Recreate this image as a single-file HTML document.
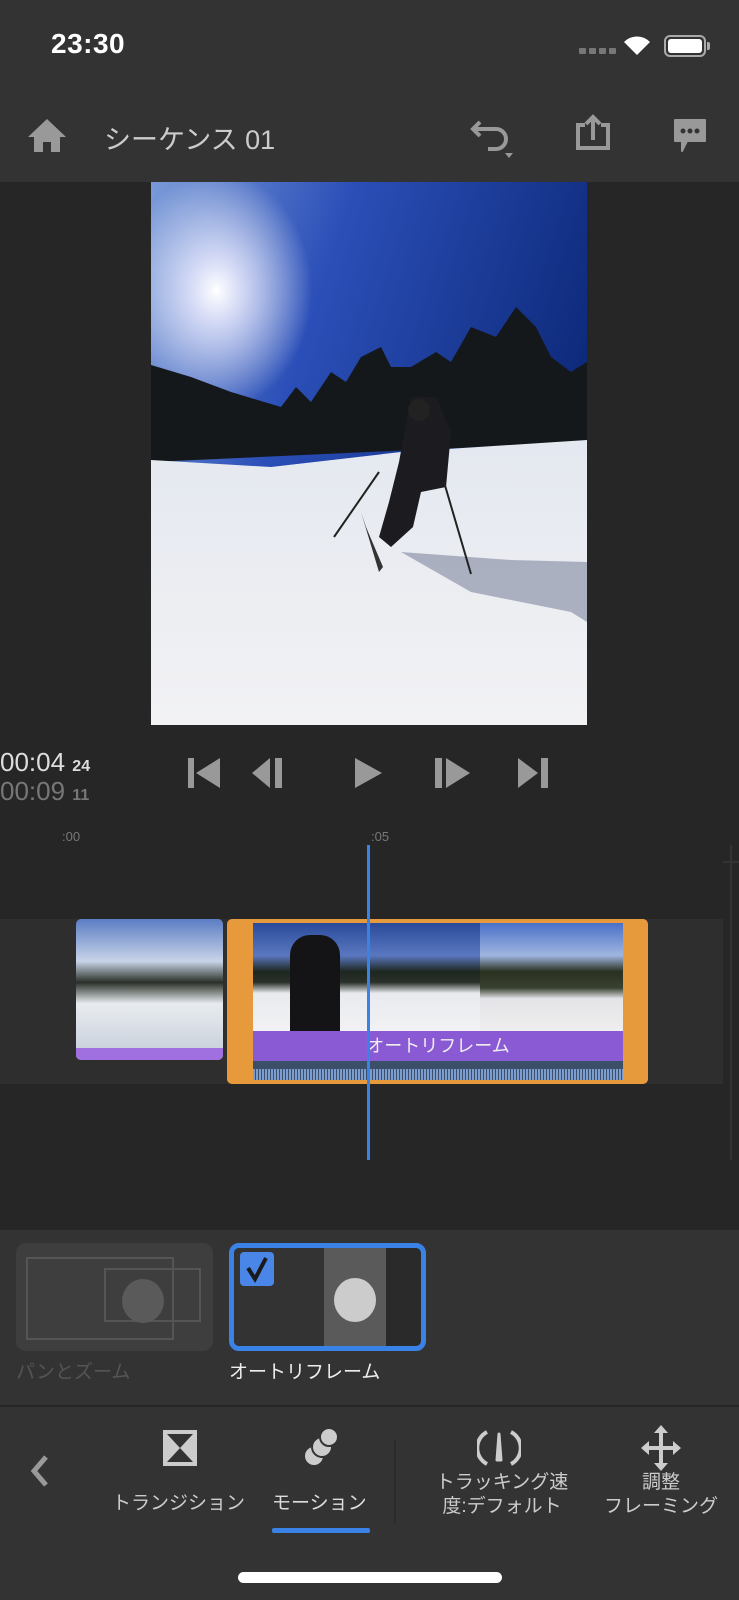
<!DOCTYPE html>
<html><head><meta charset="utf-8"><style>
*{margin:0;padding:0;box-sizing:border-box}
body{width:739px;height:1600px;background:#262626;font-family:"Liberation Sans","Noto Sans CJK JP",sans-serif;position:relative;overflow:hidden;color:#fff}
.a{position:absolute}
</style></head><body>
<div class="a" style="left:0;top:0;width:739px;height:182px;background:#333"></div>
<div class="a" style="left:51px;top:28px;font-size:28px;font-weight:bold;letter-spacing:0.5px">23:30</div>
<div class="a" style="left:579px;top:48px;width:37px;height:6px;display:flex;gap:3px"><i style="width:7px;height:6px;background:#777;border-radius:1px"></i><i style="width:7px;height:6px;background:#777;border-radius:1px"></i><i style="width:7px;height:6px;background:#777;border-radius:1px"></i><i style="width:7px;height:6px;background:#777;border-radius:1px"></i></div>
<svg class="a" style="left:622px;top:34px" width="30" height="22" viewBox="0 0 30 22"><path d="M15 21 L2 8 A18 18 0 0 1 28 8 Z" fill="#fff"/></svg>
<div class="a" style="left:664px;top:35px;width:42px;height:22px;border:2px solid #aaa;border-radius:6px;padding:2px"><div style="width:100%;height:100%;background:#fff;border-radius:3px"></div></div>
<div class="a" style="left:707px;top:42px;width:3px;height:8px;background:#aaa;border-radius:0 2px 2px 0"></div>
<svg class="a" style="left:27px;top:117px" width="40" height="36" viewBox="0 0 40 36"><path d="M20 2 L39 20 L33 20 L33 35 L24 35 L24 25 L16 25 L16 35 L7 35 L7 20 L1 20 Z" fill="#999"/></svg>
<div class="a" style="left:104px;top:118px;font-size:27px;color:#ccc">シーケンス 01</div>
<svg class="a" style="left:470px;top:117px" width="48" height="42" viewBox="0 0 48 42"><path d="M10 5 L3 12 L10 19 M3 12 L26 12 A10 10 0 0 1 26 32 L18 32" stroke="#999" stroke-width="4" fill="none"/><path d="M35 36 L43 36 L39 41Z" fill="#999"/></svg>
<svg class="a" style="left:575px;top:114px" width="36" height="36" viewBox="0 0 36 36"><path d="M10 11 L3 11 L3 34 L33 34 L33 11 L26 11" stroke="#999" stroke-width="4" fill="none"/><path d="M18 26 L18 4 M11 10 L18 3 L25 10" stroke="#999" stroke-width="4" fill="none"/></svg>
<svg class="a" style="left:672px;top:117px" width="36" height="36" viewBox="0 0 36 36"><path d="M3 3 H33 V24 H15 L10 34 L10 24 H3 Z" fill="#999" stroke="#999" stroke-width="2" stroke-linejoin="round"/><circle cx="11" cy="14" r="2.5" fill="#333"/><circle cx="18" cy="14" r="2.5" fill="#333"/><circle cx="25" cy="14" r="2.5" fill="#333"/></svg>

<svg class="a" style="left:151px;top:182px" width="436" height="543" viewBox="0 0 436 543">
<defs>
<linearGradient id="sky" x1="0" y1="0" x2="1" y2="0.4"><stop offset="0" stop-color="#7a9ad8"/><stop offset="0.4" stop-color="#2b4fb8"/><stop offset="1" stop-color="#0c2878"/></linearGradient>
<radialGradient id="sun" cx="0.15" cy="0.2" r="0.22"><stop offset="0" stop-color="#fff"/><stop offset="0.3" stop-color="#eef" stop-opacity="0.8"/><stop offset="1" stop-color="#fff" stop-opacity="0"/></radialGradient>
<linearGradient id="snow" x1="0" y1="0" x2="0" y2="1"><stop offset="0" stop-color="#e4e8f0"/><stop offset="1" stop-color="#f2f2f4"/></linearGradient>
</defs>
<rect width="436" height="543" fill="url(#sky)"/>
<rect width="436" height="543" fill="url(#sun)"/>
<path d="M0 183 L40 195 L80 210 L130 225 L145 205 L160 220 L180 190 L195 200 L210 175 L230 165 L240 185 L260 185 L285 170 L300 180 L320 145 L345 155 L365 125 L385 145 L400 175 L420 190 L436 180 L436 260 L0 280 Z" fill="#14181a"/>
<path d="M0 278 L120 285 L250 270 L436 258 L436 543 L0 543 Z" fill="url(#snow)"/>
<path d="M250 370 L320 410 L420 430 L436 440 L436 380 L360 378 Z" fill="#8e96ab" opacity="0.7"/>
<path d="M260 215 L285 215 L300 250 L295 305 L270 310 L262 345 L240 365 L228 355 L238 320 L248 280 Z" fill="#1c1c20"/>
<circle cx="268" cy="228" r="11" fill="#222"/>
<path d="M210 330 L215 345 L232 385 L228 390Z" fill="#333"/>
<path d="M183 355 L228 290 M293 300 L320 392" stroke="#222" stroke-width="2"/>
</svg>

<div class="a" style="left:0;top:747px;font-size:26px;color:#ddd">00:04 <span style="font-size:16px;font-weight:bold">24</span></div>
<div class="a" style="left:0;top:776px;font-size:26px;color:#777">00:09 <span style="font-size:16px;font-weight:bold">11</span></div>
<svg class="a" style="left:186px;top:756px" width="370" height="34" viewBox="0 0 370 34">
<g fill="#999">
<rect x="2" y="2" width="6" height="30"/><path d="M34 2 L34 32 L10 17Z"/>
<path d="M84 2 L84 32 L66 17Z"/><rect x="89" y="2" width="7" height="30"/>
<path d="M169 2 L169 32 L196 17Z"/>
<rect x="249" y="2" width="7" height="30"/><path d="M260 2 L260 32 L284 17Z"/>
<path d="M332 2 L332 32 L352 17Z"/><rect x="355" y="2" width="7" height="30"/>
</g></svg>
<div class="a" style="left:62px;top:829px;font-size:13px;color:#777">:00</div>
<div class="a" style="left:371px;top:829px;font-size:13px;color:#777">:05</div>
<div class="a" style="left:730px;top:845px;width:2px;height:315px;background:#333"></div>
<div class="a" style="left:723px;top:861px;width:16px;height:2px;background:#333"></div>
<div class="a" style="left:0;top:919px;width:723px;height:165px;background:#2e2e2e"></div>
<div class="a" style="left:76px;top:919px;width:147px;height:141px;border-radius:5px;overflow:hidden;background:linear-gradient(180deg,#5c7dc4 0%,#c8d4e8 30%,#2a3028 45%,#e8ecf0 60%,#c5ccd8 100%)">
<div style="position:absolute;left:0;bottom:0;width:100%;height:12px;background:#a070e0"></div></div>
<div class="a" style="left:227px;top:919px;width:421px;height:165px;background:#e79a3c;border-radius:5px"></div>
<div class="a" style="left:253px;top:923px;width:370px;height:108px;background:linear-gradient(180deg,#2a4a9a 0%,#5a78c0 30%,#1e2620 45%,#2a302a 55%,#e8eaee 65%,#f2f2f4 100%)"></div>
<div class="a" style="left:480px;top:923px;width:143px;height:108px;background:linear-gradient(180deg,#4a70c8 0%,#a0b6e0 30%,#2a3020 45%,#384030 60%,#e4e4e8 70%,#eee 100%)"></div>
<div class="a" style="left:290px;top:935px;width:50px;height:96px;background:#141416;border-radius:20px 20px 0 0"></div>
<div class="a" style="left:253px;top:1031px;width:370px;height:30px;background:#8a59d4;font-size:18px;text-align:center;line-height:30px;color:#eee">オートリフレーム</div>
<div class="a" style="left:253px;top:1061px;width:370px;height:19px;background:#3c4f68"></div>
<div class="a" style="left:253px;top:1069px;width:370px;height:11px;background:repeating-linear-gradient(90deg,#7d9dd0 0 2px,#3c4f68 2px 3px)"></div>
<div class="a" style="left:367px;top:845px;width:3px;height:315px;background:#3b82e6"></div>

<div class="a" style="left:0;top:1230px;width:739px;height:370px;background:#333"></div>
<div class="a" style="left:16px;top:1243px;width:197px;height:108px;background:#3e3e3e;border-radius:10px;overflow:hidden">
<div style="position:absolute;left:10px;top:14px;width:148px;height:83px;border:2px solid #555"></div>
<div style="position:absolute;left:88px;top:25px;width:97px;height:54px;border:2px solid #555"></div>
<div style="position:absolute;left:106px;top:36px;width:42px;height:44px;background:#5a5a5a;border-radius:50%"></div></div>
<div class="a" style="left:16px;top:1357px;font-size:19px;color:#555">パンとズーム</div>
<div class="a" style="left:229px;top:1243px;width:197px;height:108px;border:5px solid #3b82e6;border-radius:10px;background:#2a2a2a;overflow:hidden">
<div style="position:absolute;left:0;top:0;width:90px;height:100%;background:#333"></div>
<div style="position:absolute;left:90px;top:0;width:62px;height:100%;background:#5a5a5a"></div>
<div style="position:absolute;left:100px;top:30px;width:42px;height:44px;background:#ccc;border-radius:50%"></div>
<div style="position:absolute;left:6px;top:4px;width:34px;height:34px;background:#4a86e8;border-radius:4px"><svg width="34" height="34" viewBox="0 0 34 34"><path d="M8 16 L15 27 L26 6" stroke="#1a1a1a" stroke-width="4" fill="none"/></svg></div></div>
<div class="a" style="left:229px;top:1357px;font-size:19px;color:#eee">オートリフレーム</div>
<div class="a" style="left:0;top:1405px;width:739px;height:2px;background:#262626"></div>
<svg class="a" style="left:26px;top:1453px" width="26" height="36" viewBox="0 0 26 36"><path d="M20 4 L8 18 L20 32" stroke="#999" stroke-width="5" fill="none"/></svg>
<svg class="a" style="left:161px;top:1428px" width="38" height="40" viewBox="0 0 38 40"><rect x="2" y="2" width="34" height="36" fill="#ccc"/><path d="M6 6 L32 6 L19 20 Z M6 34 L32 34 L19 20Z" fill="#333"/></svg>
<div class="a" style="left:112px;top:1488px;font-size:19px;color:#ccc">トランジション</div>
<svg class="a" style="left:300px;top:1426px" width="40" height="44" viewBox="0 0 40 44"><circle cx="14" cy="30" r="10" fill="#ccc" stroke="#333" stroke-width="2"/><circle cx="22" cy="21" r="10" fill="#ccc" stroke="#333" stroke-width="2"/><circle cx="29" cy="11" r="9" fill="#ccc" stroke="#333" stroke-width="2"/></svg>
<div class="a" style="left:272px;top:1488px;font-size:19px;color:#ddd">モーション</div>
<div class="a" style="left:272px;top:1528px;width:98px;height:5px;background:#3b82e6;border-radius:2px"></div>
<div class="a" style="left:394px;top:1440px;width:2px;height:84px;background:#2b2b2b"></div>
<svg class="a" style="left:477px;top:1426px" width="44" height="42" viewBox="0 0 44 42"><path d="M10 38 A18 18 0 0 1 10 6 M34 38 A18 18 0 0 0 34 6" stroke="#ccc" stroke-width="4" fill="none"/><path d="M20 34 L22 8 L24 34 Z" fill="#ccc" stroke="#ccc" stroke-width="3" stroke-linejoin="round"/></svg>
<div class="a" style="left:429px;top:1471px;font-size:19px;color:#ccc;line-height:24px;width:146px;text-align:center">トラッキング速<br>度:デフォルト</div>
<svg class="a" style="left:641px;top:1425px" width="40" height="46" viewBox="0 0 40 46"><path d="M20 4 V42 M2 23 H38" stroke="#ccc" stroke-width="4"/><path d="M20 0 L27 8 H13Z M20 46 L27 38 H13Z M0 23 L8 16 V30Z M40 23 L32 16 V30Z" fill="#ccc"/></svg>
<div class="a" style="left:596px;top:1471px;font-size:19px;color:#ccc;line-height:24px;width:130px;text-align:center">調整<br>フレーミング</div>
<div class="a" style="left:238px;top:1572px;width:264px;height:11px;background:#fff;border-radius:6px"></div>
</body></html>
